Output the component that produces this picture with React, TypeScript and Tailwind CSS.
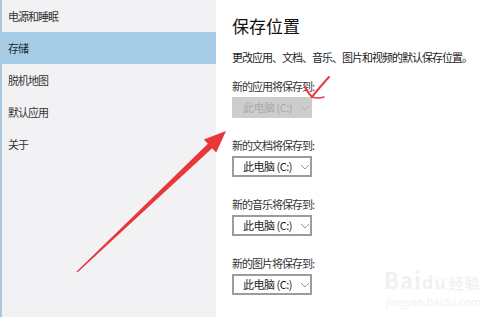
const font = { fontFamily: '"Noto Sans CJK SC", "Noto Sans", sans-serif' };

const navItems = ["电源和睡眠", "存储", "脱机地图", "默认应用", "关于"];

const groups = [
  { label: "新的应用将保存到:", disabled: true },
  { label: "新的文档将保存到:" },
  { label: "新的音乐将保存到:" },
  { label: "新的图片将保存到:" },
];

function Chevron({ color }: { color: string }) {
  return (
    <svg width="10" height="6" viewBox="0 0 10 6" className="ml-[8px] shrink-0">
      <path d="M1 1l4 4 4-4" fill="none" stroke={color} strokeWidth="1" />
    </svg>
  );
}

function Dropdown({ disabled }: { disabled?: boolean }) {
  if (disabled) {
    return (
      <div className="w-[80px] h-[21px] bg-[#cdcdcd] flex items-center pl-[11px] text-[11px] tracking-[-0.5px] whitespace-nowrap text-[#aaaaaa]">
        此电脑 (C:)
        <Chevron color="#b0b0b0" />
      </div>
    );
  }
  return (
    <div className="w-[80px] h-[21px] border-2 border-[#9c9c9c] bg-white flex items-center pl-[9px] text-[11px] tracking-[-0.5px] whitespace-nowrap text-[#222]">
      此电脑 (C:)
      <Chevron color="#999" />
    </div>
  );
}

export default function App() {
  return (
    <div
      className="relative w-[500px] h-[317px] overflow-hidden flex bg-white"
      style={font}
    >
      <div className="w-[216px] shrink-0 bg-[#f2f2f4] border-l-2 border-[#a9c9e2]">
        {navItems.map((item) => (
          <div
            key={item}
            className={
              "h-[32px] flex items-center pl-[6px] text-[11px] tracking-[-1px] " +
              (item === "存储"
                ? "bg-[#a6cbe5] text-[#1c2a36]"
                : "text-[#333]")
            }
          >
            {item}
          </div>
        ))}
      </div>

      <div className="flex-1 pl-[16px] pt-[14px] whitespace-nowrap">
        <h1 className="text-[17px] leading-[24px] text-[#111] font-normal">
          保存位置
        </h1>
        <p className="mt-[11px] text-[11px] tracking-[-1px] leading-[16px] text-[#222]">
          更改应用、文档、音乐、图片和视频的默认保存位置。
        </p>
        <div className="mt-[13px] flex flex-col gap-[19px]">
          {groups.map((g) => (
            <div key={g.label}>
              <div className="text-[11px] tracking-[-1px] leading-[16px] text-[#333]">
                {g.label}
              </div>
              <div className="mt-[3px]">
                <Dropdown disabled={g.disabled} />
              </div>
            </div>
          ))}
          <div className="text-[11px] tracking-[-1px] leading-[16px] text-[#666]">
            新的视频将保存到:
          </div>
        </div>
      </div>

      {/* baidu watermark */}
      <div className="absolute left-[384px] top-[268px] text-[#f1f1f1] leading-none">
        <div className="text-[22px] font-bold tracking-[1px]">
          Bai<span className="text-[18px]">du</span>
          <span className="text-[15px] ml-[2px]">经验</span>
        </div>
        <div className="text-[11px] mt-[6px] ml-[2px]">jingyan.baidu.com</div>
      </div>

      {/* red annotations */}
      <svg
        className="absolute left-0 top-0 pointer-events-none"
        width="500"
        height="317"
        viewBox="0 0 500 317"
      >
        <polygon
          points="76.6,271.6 77.4,272.4 212.1,148.2 216.2,152.5 226,131 203.8,139.5 207.9,143.8"
          fill="#e8363a"
        />
        <path
          d="M305 87 Q308 93 312 97 Q319 88 329 77"
          fill="none"
          stroke="#e63a46"
          strokeWidth="2"
          strokeLinecap="round"
        />
        <path
          d="M312 97 Q318 99 324 97"
          fill="none"
          stroke="#e63a46"
          strokeWidth="1.5"
          strokeLinecap="round"
        />
      </svg>
    </div>
  );
}
